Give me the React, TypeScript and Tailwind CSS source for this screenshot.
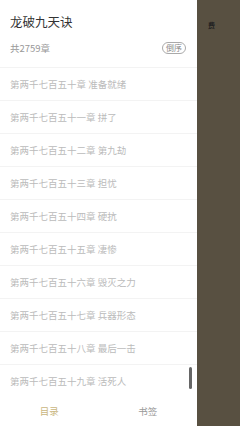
import React from "react";

const chapters = [
  "第两千七百五十章 准备就绪",
  "第两千七百五十一章 拼了",
  "第两千七百五十二章 第九劫",
  "第两千七百五十三章 担忧",
  "第两千七百五十四章 硬抗",
  "第两千七百五十五章 凄惨",
  "第两千七百五十六章 毁灭之力",
  "第两千七百五十七章 兵器形态",
  "第两千七百五十八章 最后一击",
  "第两千七百五十九章 活死人",
];

export default function App() {
  return (
    <div
      className="flex w-[240px] h-[426px] overflow-hidden"
      style={{ fontFamily: '"Noto Sans CJK SC", "Noto Sans", sans-serif' }}
    >
      <div className="relative flex flex-col w-[197px] h-full bg-white">
        <div className="flex flex-col px-[10px] pt-[12px] h-[67px]">
          <div className="text-[12.5px] leading-[20px] text-[#333]">龙破九天诀</div>
          <div className="flex items-center justify-between mt-[9px] h-[14px]">
            <span className="text-[9.5px] text-[#999]">共2759章</span>
            <span className="mr-[1px] px-[3px] h-[12px] rounded-full border border-[#aaa] text-[8px] leading-[10px] text-[#888] flex items-center">
              倒序
            </span>
          </div>
        </div>
        <div className="flex flex-col">
          {chapters.map((c) => (
            <div
              key={c}
              className="h-[33px] border-t border-[#f3f3f3] flex items-center px-[10px] text-[9.5px] text-[#bbbbbb]"
            >
              {c}
            </div>
          ))}
        </div>
        <div className="flex flex-1 items-center">
          <div className="flex-1 text-center text-[9.5px] text-[#c9b67e]">目录</div>
          <div className="flex-1 text-center text-[9.5px] text-[#999]">书签</div>
        </div>
        <div className="absolute left-[189px] top-[367px] w-[3px] h-[22px] rounded-full bg-[#666]" />
      </div>
      <div className="flex-1 h-full bg-[#585041] relative">
        <div className="absolute left-[11px] top-[20px] text-[7px] text-[#222] font-bold">费</div>
      </div>
    </div>
  );
}
